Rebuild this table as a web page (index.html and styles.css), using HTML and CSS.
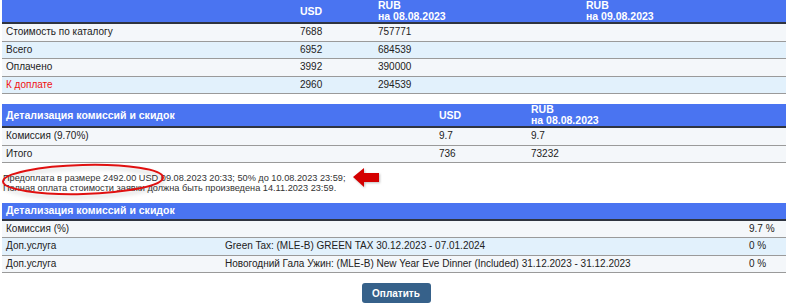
FILE: index.html
```html
<!DOCTYPE html>
<html>
<head>
<meta charset="utf-8">
<link rel="stylesheet" href="styles.css">
</head>
<body>
<div class="page">
  <table class="grid t1">
    <colgroup><col style="width:294px"><col style="width:78px"><col style="width:208px"><col></colgroup>
    <thead>
      <tr><th></th><th>USD</th><th>RUB<br>на 08.08.2023</th><th>RUB<br>на 09.08.2023</th></tr>
    </thead>
    <tbody>
      <tr class="odd"><td>Стоимость по каталогу</td><td>7688</td><td>757771</td><td></td></tr>
      <tr class="even"><td>Всего</td><td>6952</td><td>684539</td><td></td></tr>
      <tr class="odd"><td>Оплачено</td><td>3992</td><td>390000</td><td></td></tr>
      <tr class="even"><td class="due">К доплате</td><td>2960</td><td>294539</td><td></td></tr>
    </tbody>
  </table>

  <table class="grid t2">
    <colgroup><col style="width:433px"><col style="width:92px"><col></colgroup>
    <thead>
      <tr><th>Детализация комиссий и скидок</th><th>USD</th><th>RUB<br>на 08.08.2023</th></tr>
    </thead>
    <tbody>
      <tr class="odd"><td>Комиссия (9.70%)</td><td>9.7</td><td>9.7</td></tr>
      <tr class="odd"><td>Итого</td><td>736</td><td>73232</td></tr>
    </tbody>
  </table>

  <div class="note">
    <p>Предоплата в размере 2492.00 USD 09.08.2023 20:33; 50% до 10.08.2023 23:59;</p>
    <p>Полная оплата стоимости заявки должна быть произведена 14.11.2023 23:59.</p>
    <svg class="ring" width="170" height="38" viewBox="0 0 170 38">
      <ellipse cx="83" cy="17.5" rx="80" ry="14.5" fill="none" stroke="#e01010" stroke-width="2" transform="rotate(-1.5 83 17.5)"/>
    </svg>
    <svg class="arrow" width="30" height="22" viewBox="0 0 30 22">
      <path d="M1 10 L12 1 L12 6 L27 6 L27 15 L12 15 L12 20 Z" fill="#d40000"/>
    </svg>
  </div>

  <table class="grid t3">
    <colgroup><col style="width:219px"><col style="width:524px"><col></colgroup>
    <thead>
      <tr><th colspan="3">Детализация комиссий и скидок</th></tr>
    </thead>
    <tbody>
      <tr class="odd"><td>Комиссия (%)</td><td></td><td>9.7 %</td></tr>
      <tr class="even"><td>Доп.услуга</td><td>Green Tax: (MLE-B) GREEN TAX 30.12.2023 - 07.01.2024</td><td>0 %</td></tr>
      <tr class="odd"><td>Доп.услуга</td><td>Новогодний Гала Ужин: (MLE-B) New Year Eve Dinner (Included) 31.12.2023 - 31.12.2023</td><td>0 %</td></tr>
    </tbody>
  </table>

  <div class="actions"><button class="pay">Оплатить</button></div>
</div>
</body>
</html>
```

FILE: styles.css
```css
html, body {
  margin: 0;
  padding: 0;
  background: #fff;
}
.page {
  padding: 0 2px;
  font-family: "Liberation Sans", Arial, sans-serif;
  font-size: 10px;
  color: #222;
}
.grid {
  width: 100%;
  border-collapse: collapse;
  table-layout: fixed;
}
.grid th {
  background: #4a74f1;
  color: #fff;
  font-weight: bold;
  font-size: 10.5px;
  text-align: left;
  padding: 0 4px;
  line-height: 11px;
  border-bottom: 2px solid #2f3440;
}
.grid td {
  padding: 0 4px;
  height: 16.5px;
  line-height: 16px;
  border-bottom: 1px solid #9a9a9a;
  white-space: nowrap;
  overflow: hidden;
}
.grid tr.odd td { background: #f4f7fa; }
.grid tr.even td { background: #e2f1fc; }
.t1 th { height: 21.5px; }
.t2 { margin-top: 10px; }
.t2 th { height: 21px; }
.t3 th { height: 15.5px; }
.due { color: #f01010; }
.note {
  position: relative;
  padding: 10px 1px 10px;
  font-size: 9.2px;
  line-height: 10px;
  color: #333;
}
.note p { margin: 0; }
.ring {
  position: absolute;
  left: -2px;
  top: -1px;
  filter: drop-shadow(0 3px 2px rgba(0,0,0,0.18));
}
.arrow {
  position: absolute;
  left: 350px;
  top: 4px;
  filter: drop-shadow(1px 1px 1px rgba(0,0,0,0.25));
}
.actions {
  display: flex;
  justify-content: center;
  padding-top: 10px;
  padding-left: 4px;
}
.pay {
  background: #36618a;
  color: #fff;
  border: none;
  border-radius: 3px;
  font-family: "Liberation Sans", Arial, sans-serif;
  font-weight: bold;
  font-size: 10px;
  height: 20px;
  width: 69px;
  padding: 0;
}
```
